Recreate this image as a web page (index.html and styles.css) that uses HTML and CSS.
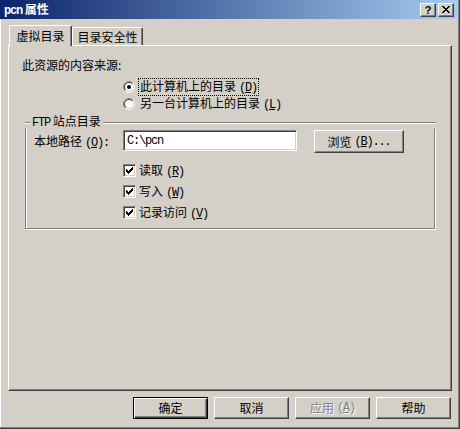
FILE: index.html
```html
<!DOCTYPE html>
<html lang="zh-CN">
<head>
  <meta charset="UTF-8">
  <title>pcn 属性</title>
  <link rel="stylesheet" href="styles.css">
</head>
<body>
  <div class="window">
    <!-- Barra de título -->
    <div class="titlebar">
      <span class="caption"><span class="lat">pcn</span> 属性</span>
      <span class="tb-btn help">?</span>
      <span class="tb-btn close">
        <svg width="8" height="7" viewBox="0 0 8 7" shape-rendering="crispEdges">
          <path d="M0 0h2v1h1v1h2v-1h1v-1h2v1h-1v1h-1v1h-1v1h1v1h1v1h1v1h-2v-1h-1v-1h-2v1h-1v1h-2v-1h1v-1h1v-1h1v-1h-1v-1h-1v-1h-1z" fill="#000"/>
        </svg>
      </span>
    </div>

    <div class="dialog">
      <!-- Pestañas -->
      <div class="tabs">
        <div class="tab active">虚拟目录</div>
        <div class="tab">目录安全性</div>
      </div>

      <div class="panel">
        <div class="source-label">此资源的内容来源:</div>

        <div class="radios">
          <div class="radio-row">
            <svg class="radio" width="12" height="12" viewBox="0 0 12 12">
              <defs>
                <linearGradient id="ringOut" x1="0" y1="0" x2="1" y2="1">
                  <stop offset="0.5" stop-color="#808080"/>
                  <stop offset="0.5" stop-color="#ffffff"/>
                </linearGradient>
                <linearGradient id="ringIn" x1="0" y1="0" x2="1" y2="1">
                  <stop offset="0.5" stop-color="#404040"/>
                  <stop offset="0.5" stop-color="#d4d0c8"/>
                </linearGradient>
              </defs>
              <circle cx="6" cy="6" r="5.5" fill="none" stroke="url(#ringOut)"/>
              <circle cx="6" cy="6" r="4.5" fill="#fff" stroke="url(#ringIn)"/>
              <circle cx="6" cy="6" r="2" fill="#000"/>
            </svg>
            <span class="radio-label focused">此计算机上的目录<span class="lat key">(<u>D</u>)</span></span>
          </div>
          <div class="radio-row">
            <svg class="radio" width="12" height="12" viewBox="0 0 12 12">
              <circle cx="6" cy="6" r="5.5" fill="none" stroke="url(#ringOut)"/>
              <circle cx="6" cy="6" r="4.5" fill="#fff" stroke="url(#ringIn)"/>
            </svg>
            <span class="radio-label">另一台计算机上的目录<span class="lat key">(<u>L</u>)</span></span>
          </div>
        </div>

        <!-- Grupo FTP -->
        <div class="group">
          <div class="group-head">
            <span class="line short"></span>
            <span class="group-title"><span class="lat">FTP</span> 站点目录</span>
            <span class="line fill"></span>
          </div>
          <div class="group-body">
            <div class="path-row">
              <span class="path-label">本地路径<span class="lat key">(<u>O</u>):</span></span>
              <div class="textbox"><span class="lat">C:\pcn</span></div>
              <button class="btn browse">浏览<span class="lat key">(<u>B</u>)...</span></button>
            </div>

            <div class="checks">
              <div class="check-row">
                <span class="checkbox">
                  <svg width="7" height="7" viewBox="0 0 7 7" shape-rendering="crispEdges"><path d="M0 2h1v1h1v1h1v-1h1v-1h1v-1h1v-1h1v3h-1v1h-1v1h-1v1h-1v1h-1v-1h-1v-1h-1v-1h-1z" fill="#000"/></svg>
                </span>
                <span>读取<span class="lat key">(<u>R</u>)</span></span>
              </div>
              <div class="check-row">
                <span class="checkbox">
                  <svg width="7" height="7" viewBox="0 0 7 7" shape-rendering="crispEdges"><path d="M0 2h1v1h1v1h1v-1h1v-1h1v-1h1v-1h1v3h-1v1h-1v1h-1v1h-1v1h-1v-1h-1v-1h-1v-1h-1z" fill="#000"/></svg>
                </span>
                <span>写入<span class="lat key">(<u>W</u>)</span></span>
              </div>
              <div class="check-row">
                <span class="checkbox">
                  <svg width="7" height="7" viewBox="0 0 7 7" shape-rendering="crispEdges"><path d="M0 2h1v1h1v1h1v-1h1v-1h1v-1h1v-1h1v3h-1v1h-1v1h-1v1h-1v1h-1v-1h-1v-1h-1v-1h-1z" fill="#000"/></svg>
                </span>
                <span>记录访问<span class="lat key">(<u>V</u>)</span></span>
              </div>
            </div>
          </div>
        </div>
      </div>

      <!-- Botones -->
      <div class="actions">
        <button class="btn default">确定</button>
        <button class="btn">取消</button>
        <button class="btn disabled">应用<span class="lat key">(<u>A</u>)</span></button>
        <button class="btn">帮助</button>
      </div>
    </div>
  </div>
</body>
</html>
```

FILE: styles.css
```css
body {
  margin: 0;
  font-family: "Noto Sans CJK SC", sans-serif;
  font-size: 12px;
  line-height: 16px;
  color: #000;
}

.lat {
  font-family: "Liberation Mono", "Noto Sans CJK SC", monospace;
  font-size: 12px;
  letter-spacing: -1.2px;
}

.lat.key {
  margin-left: 3px;
}

.window {
  width: 460px;
  height: 429px;
  box-sizing: border-box;
  background: #d4d0c8;
  border-right: 1px solid #404040;
  border-bottom: 1px solid #404040;
  box-shadow: inset -1px -1px #808080, inset 1px 0 #fff;
  display: flex;
  flex-direction: column;
}

/* Barra de título */
.titlebar {
  height: 19px;
  margin-right: 2px;
  padding-left: 4px;
  background: linear-gradient(to right, #0a246a, #a6caf0);
  color: #fff;
  font-weight: bold;
  display: flex;
  align-items: center;
}

.titlebar .caption {
  flex: 1;
}

.titlebar .lat {
  font-weight: bold;
}

.tb-btn {
  width: 16px;
  height: 14px;
  box-sizing: border-box;
  background: #d4d0c8;
  border: 1px solid;
  border-color: #fff #404040 #404040 #fff;
  box-shadow: inset -1px -1px #808080;
  color: #000;
  display: flex;
  align-items: center;
  justify-content: center;
  font-family: "Liberation Sans", sans-serif;
  font-size: 11px;
  font-weight: bold;
  line-height: 12px;
}

.tb-btn.help {
  margin-right: 2px;
}

.tb-btn.close {
  margin-right: 3px;
}

/* Contenido */
.dialog {
  padding: 6px 0 0 8px;
}

.tabs {
  display: flex;
  align-items: flex-end;
  height: 20px;
  position: relative;
  z-index: 1;
}

.tab {
  box-sizing: border-box;
  height: 18px;
  width: 71px;
  padding-top: 1px;
  text-align: center;
  background: #d4d0c8;
  border-top: 1px solid #fff;
  border-left: 1px solid #fff;
  border-right: 1px solid #404040;
  box-shadow: inset -1px 0 #808080;
  border-radius: 2px 2px 0 0;
}

.tab.active {
  width: 63px;
  height: 21px;
  margin-left: 1px;
  margin-bottom: -1px;
  padding-top: 2px;
}

.panel {
  width: 444px;
  height: 346px;
  box-sizing: border-box;
  border-top: 1px solid #fff;
  border-left: 1px solid #fff;
  border-right: 1px solid #404040;
  border-bottom: 1px solid #404040;
  box-shadow: inset -1px -1px #808080;
  padding: 11px 0 0 13px;
}

.radios {
  margin: 6px 0 0 101px;
}

.radio-row {
  display: flex;
  align-items: center;
  height: 16px;
}

.radio-row + .radio-row {
  margin-top: 1px;
}

.radio {
  flex: none;
  margin-right: 3px;
}

.radio-label {
  padding: 0 1px;
  line-height: 14px;
  border: 1px solid transparent;
}

.radio-label.focused {
  border: 1px dotted #000;
}

/* Grupo */
.group {
  width: 410px;
  margin: 4px 0 0 3px;
}

.group-head {
  display: flex;
  align-items: center;
  height: 12px;
}

.group-title {
  padding: 0 2px;
  line-height: 12px;
}

.line {
  height: 0;
  border-top: 1px solid #808080;
  border-bottom: 1px solid #fff;
  margin-top: 1px;
}

.line.short {
  width: 5px;
}

.line.fill {
  flex: 1;
  margin-right: -1px;
}

.group-body {
  border: 1px solid #808080;
  border-top: none;
  box-shadow: inset 1px 0 #fff, 1px 1px #fff;
  padding: 2px 0 5px 8px;
}

.path-row {
  display: flex;
  align-items: center;
  height: 23px;
}

.path-label {
  width: 89px;
}

.textbox {
  align-self: flex-start;
  width: 174px;
  height: 21px;
  box-sizing: border-box;
  background: #fff;
  border: 1px solid;
  border-color: #808080 #fff #fff #808080;
  box-shadow: inset 1px 1px #404040, inset -1px -1px #d4d0c8;
  padding-left: 3px;
  display: flex;
  align-items: center;
}

.btn {
  width: 75px;
  height: 22px;
  box-sizing: border-box;
  padding: 0;
  margin: 0;
  background: #d4d0c8;
  border: 1px solid;
  border-color: #fff #404040 #404040 #fff;
  border-radius: 0;
  box-shadow: inset -1px -1px #808080;
  font-family: "Noto Sans CJK SC", sans-serif;
  font-size: 12px;
  line-height: 16px;
  color: #000;
  display: flex;
  align-items: center;
  justify-content: center;
}

.btn.browse {
  width: 90px;
  height: 23px;
  margin-left: 17px;
}

.btn.default {
  border-color: #000;
  box-shadow: inset 1px 1px #fff, inset -1px -1px #404040, inset -2px -2px #808080;
}

.btn.disabled {
  color: #808080;
  text-shadow: 1px 1px #fff;
}

.checks {
  margin: 7px 0 0 89px;
}

.check-row {
  display: flex;
  align-items: center;
  height: 21px;
}

.checkbox {
  width: 13px;
  height: 13px;
  box-sizing: border-box;
  margin-right: 3px;
  background: #fff;
  border: 1px solid;
  border-color: #808080 #fff #fff #808080;
  box-shadow: inset 1px 1px #404040, inset -1px -1px #d4d0c8;
  display: flex;
  align-items: center;
  justify-content: center;
}

.actions {
  width: 444px;
  box-sizing: border-box;
  margin-top: 6px;
  padding-right: 1px;
  display: flex;
  justify-content: flex-end;
  gap: 6px;
}
```
